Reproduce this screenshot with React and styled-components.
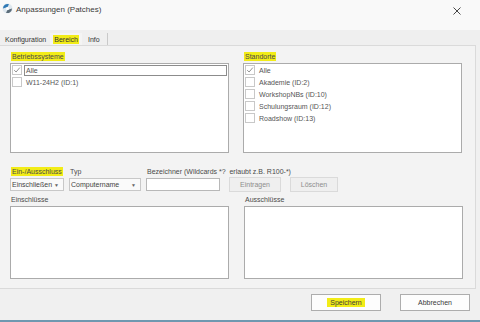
import React from "react";
import styled, { createGlobalStyle } from "styled-components";

const Global = createGlobalStyle`
  html, body { margin: 0; padding: 0; background: #f0f0f0; }
  body { font-family: "Liberation Sans", Arial, sans-serif; }
  * { box-sizing: border-box; }
`;

const Window = styled.div`
  width: 480px;
  height: 322px;
  display: flex;
  flex-direction: column;
  background: #f0f0f0;
  font-size: 7px;
  color: #4a4a4a;
  overflow: hidden;
`;

const TitleBar = styled.div`
  height: 30px;
  flex: none;
  background: #f9f9f9;
  display: flex;
  align-items: flex-start;
  padding: 3px 0 0 2px;
`;

const TitleText = styled.span`
  font-size: 8px;
  color: #3a3a3a;
  margin-left: 3px;
  margin-top: 2px;
`;

const CloseBtn = styled.div`
  margin-left: auto;
  margin-right: 19px;
  margin-top: 4px;
`;

const TabStrip = styled.div`
  height: 15px;
  flex: none;
  display: flex;
  align-items: flex-end;
  padding-left: 2px;
  background: #efefef;
`;

const Tab = styled.div`
  height: 12px;
  padding: 0 3px;
  display: flex;
  align-items: center;
  color: #333;
  border-right: ${(p) => (p.$last ? "1px solid #c9c9c9" : "none")};
  margin-right: ${(p) => (p.$last ? "0" : "1px")};
  background: ${(p) => (p.$active ? "#f4f4f4" : "transparent")};
`;

const Mark = styled.span`
  background: ${(p) => (p.$on ? "#f2ec17" : "transparent")};
  padding: 1px 1px;
`;

const Panel = styled.div`
  flex: none;
  height: 244px;
  margin-right: 4px;
  background: #f3f3f3;
  border: 1px solid #dadada;
  border-left: none;
  padding: 4px 12px 0 10px;
  display: flex;
  flex-direction: column;
`;

const Columns = styled.div`
  display: grid;
  grid-template-columns: 219px 219px;
  column-gap: 14px;
`;

const Group = styled.div`
  display: flex;
  flex-direction: column;
`;

const Label = styled.div`
  height: 13px;
  display: flex;
  align-items: center;
  padding-left: 1px;
  white-space: nowrap;
  color: #4a4a4a;
`;

const ListBox = styled.div`
  height: ${(p) => p.$h}px;
  background: #fff;
  border: 1px solid #ababab;
  padding: 0 1px;
  display: flex;
  flex-direction: column;
`;

const Row = styled.div`
  height: 12px;
  display: flex;
  align-items: center;
  gap: 2px;
`;

const Box = styled.div`
  width: 10px;
  height: 10px;
  flex: none;
  border: 1px solid #c8c8c8;
  background: #fff;
  display: flex;
  align-items: center;
  justify-content: center;
`;

const ItemText = styled.div`
  flex: ${(p) => (p.$focus ? 1 : "none")};
  height: 11px;
  display: flex;
  align-items: center;
  padding-left: 1px;
  color: #555;
  border: ${(p) => (p.$focus ? "1px solid #8c8c8c" : "1px solid transparent")};
`;

const Controls = styled.div`
  margin-top: 12px;
  display: flex;
  align-items: flex-end;
  gap: 5px;
`;

const Field = styled.div`
  width: ${(p) => p.$w}px;
  display: flex;
  flex-direction: column;
`;

const Combo = styled.div`
  height: 13px;
  background: #fafafa;
  border: 1px solid #c8c8c8;
  display: flex;
  align-items: center;
  padding-left: 1px;
  color: #444;
`;

const Arrow = styled.span`
  margin-left: auto;
  margin-right: 4px;
  font-size: 5px;
  color: #666;
`;

const TextInput = styled.div`
  height: 13px;
  background: #fff;
  border: 1px solid #b8b8b8;
`;

const SmallButton = styled.div`
  width: ${(p) => p.$w}px;
  height: 15px;
  margin-left: ${(p) => p.$ml}px;
  margin-bottom: -1px;
  background: #efefef;
  border: 1px solid #dadada;
  display: flex;
  align-items: center;
  justify-content: center;
  color: #8e8e8e;
`;

const Lower = styled.div`
  margin-top: 2px;
  display: grid;
  grid-template-columns: 219px 219px;
  column-gap: 15px;
`;

const Footer = styled.div`
  flex: 1;
  display: flex;
  justify-content: flex-end;
  align-items: flex-start;
  padding: 5px 10px 0 0;
  gap: 19px;
`;

const DlgButton = styled.div`
  width: 70px;
  height: 17px;
  background: #fdfdfd;
  border: 1px solid #adadad;
  display: flex;
  align-items: center;
  justify-content: center;
  color: #3a3a3a;
`;

const Accent = styled.div`
  height: 2px;
  flex: none;
  background: #6f98b0;
`;

const Check = () => (
  <svg width="8" height="8" viewBox="0 0 8 8">
    <path d="M1.2 4.2 L3.1 6 L6.8 1.6" stroke="#777" strokeWidth="0.8" fill="none" />
  </svg>
);

const Item = ({ checked, focus, children }) => (
  <Row>
    <Box>{checked && <Check />}</Box>
    <ItemText $focus={focus}>{children}</ItemText>
  </Row>
);

const AppIcon = () => (
  <svg width="11" height="11" viewBox="0 0 11 11">
    <circle cx="5.5" cy="5.5" r="5" fill="#dfe8ef" />
    <path d="M1 5.5 A4.5 4.5 0 0 1 7 1.3 L5.5 4 Z" fill="#2f79b5" />
    <path d="M10 5.5 A4.5 4.5 0 0 1 4 9.7 L5.5 7 Z" fill="#5c6d7a" />
    <circle cx="5.5" cy="5.5" r="1.5" fill="#fff" />
  </svg>
);

export default function App() {
  return (
    <>
      <Global />
      <Window>
        <TitleBar>
          <AppIcon />
          <TitleText>Anpassungen (Patches)</TitleText>
          <CloseBtn>
            <svg width="8" height="8" viewBox="0 0 8 8">
              <path d="M0.5 0.5 L7.5 7.5 M7.5 0.5 L0.5 7.5" stroke="#333" strokeWidth="0.9" />
            </svg>
          </CloseBtn>
        </TitleBar>
        <TabStrip>
          <Tab>Konfiguration</Tab>
          <Tab $active>
            <Mark $on>Bereich</Mark>
          </Tab>
          <Tab $last>&nbsp;Info&nbsp;&nbsp;</Tab>
        </TabStrip>
        <Panel>
          <Columns>
            <Group>
              <Label>
                <Mark $on>Betriebssysteme</Mark>
              </Label>
              <ListBox $h={90}>
                <Item checked focus>Alle</Item>
                <Item>W11-24H2 (ID:1)</Item>
              </ListBox>
            </Group>
            <Group>
              <Label>
                <Mark $on>Standorte</Mark>
              </Label>
              <ListBox $h={90}>
                <Item checked>Alle</Item>
                <Item>Akademie (ID:2)</Item>
                <Item>WorkshopNBs (ID:10)</Item>
                <Item>Schulungsraum (ID:12)</Item>
                <Item>Roadshow (ID:13)</Item>
              </ListBox>
            </Group>
          </Columns>
          <Controls>
            <Field $w={54}>
              <Label>
                <Mark $on>Ein-/Ausschluss</Mark>
              </Label>
              <Combo>
                Einschließen<Arrow>▼</Arrow>
              </Combo>
            </Field>
            <Field $w={72}>
              <Label>Typ</Label>
              <Combo>
                Computername<Arrow>▼</Arrow>
              </Combo>
            </Field>
            <Field $w={74}>
              <Label>Bezeichner (Wildcards *?&nbsp; erlaubt z.B. R100-*)</Label>
              <TextInput />
            </Field>
            <SmallButton $w={52} $ml={4}>Eintragen</SmallButton>
            <SmallButton $w={48} $ml={4}>Löschen</SmallButton>
          </Controls>
          <Lower>
            <Group>
              <Label>Einschlüsse</Label>
              <ListBox $h={73} />
            </Group>
            <Group>
              <Label>Ausschlüsse</Label>
              <ListBox $h={73} />
            </Group>
          </Lower>
        </Panel>
        <Footer>
          <DlgButton>
            <Mark $on>&nbsp;Speichern&nbsp;</Mark>
          </DlgButton>
          <DlgButton>Abbrechen</DlgButton>
        </Footer>
        <Accent />
      </Window>
    </>
  );
}
